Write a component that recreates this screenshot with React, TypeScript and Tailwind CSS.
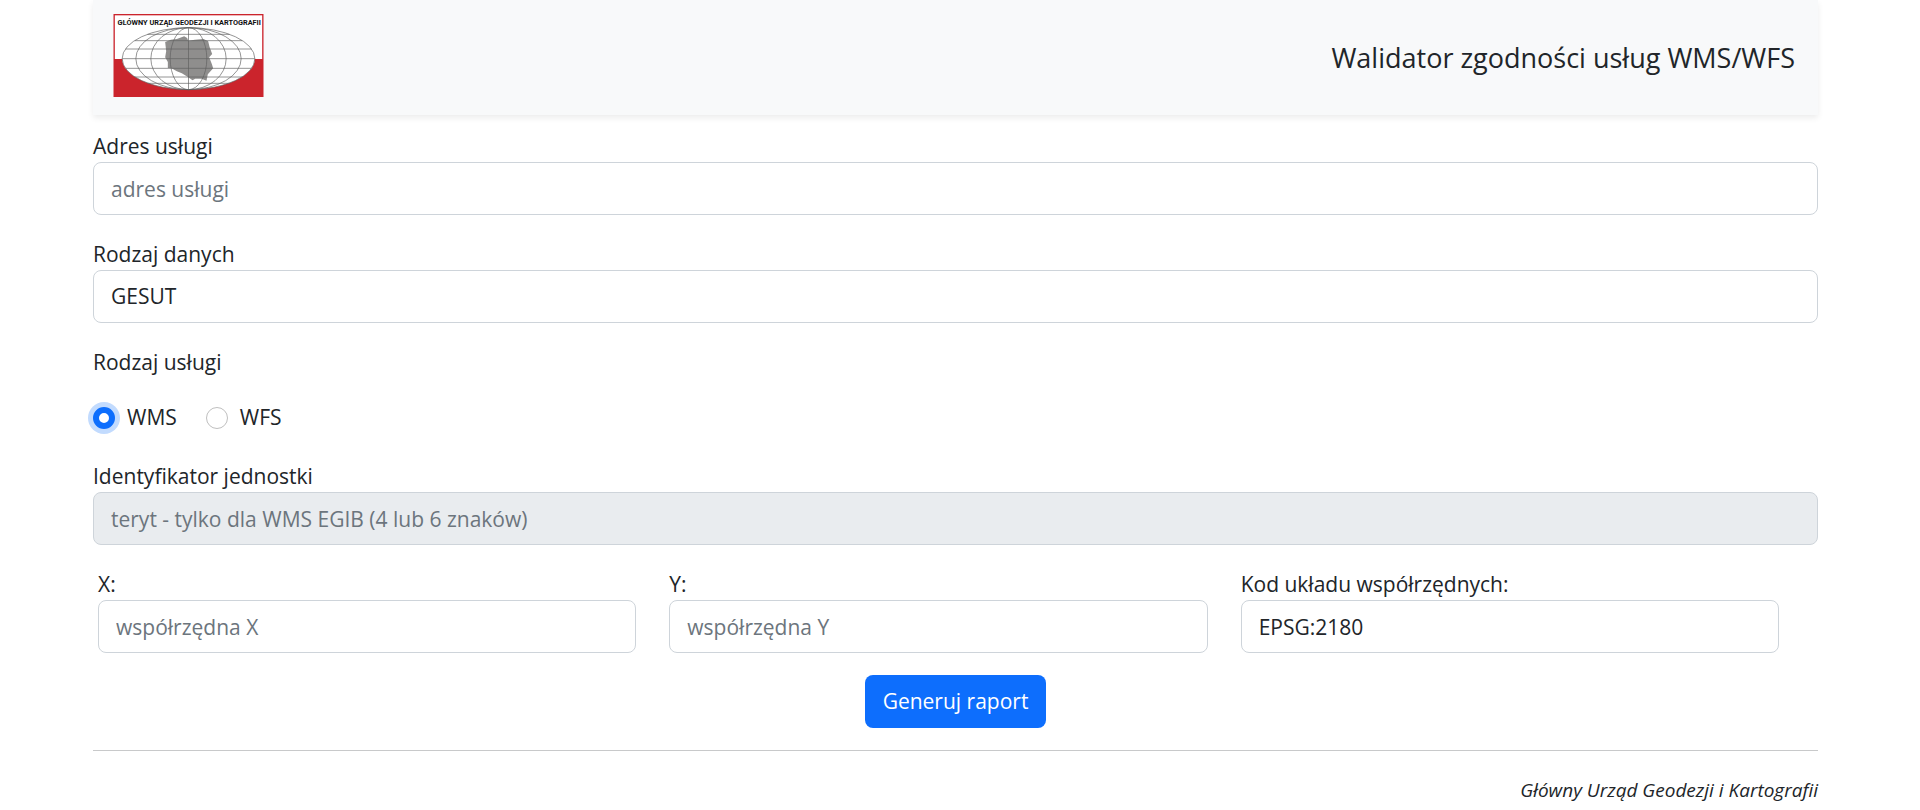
import { useState } from "react";
import type { InputHTMLAttributes, ReactNode } from "react";

const controlClass =
  "block w-full h-[53px] appearance-none rounded-lg border border-[#ced4da] bg-white px-[17px] text-[21px] text-[#212529] placeholder:text-[#6c757d] focus:border-[#86b7fe] focus:outline-none disabled:bg-[#e9ecef]";

const Logo = () => (
  <svg viewBox="0 0 450 249" className="h-[83px] w-[151px]" role="img" aria-label="GUGiK">
    <rect width="450" height="249" fill="#cb242c" />
    <rect x="4" y="4" width="442" height="131" fill="#fff" />
    <ellipse cx="225" cy="134" rx="199" ry="93" fill="#fff" />
    <path
      d="M155 84 L172 77 L190 75 L212 67 L221 72 L224 80 L244 77 L270 75 L284 82 L288 98 L296 120 L287 130 L295 150 L299 163 L283 181 L279 200 L264 194 L245 194 L237 199 L222 188 L205 178 L190 172 L174 163 L163 162 L163 144 L155 130 L158 112 Z"
      fill="#8f8e8d"
    />
    <g fill="none" stroke="#5f5f5f" strokeWidth="2">
      <ellipse cx="225" cy="134" rx="199" ry="93" />
      <ellipse cx="225" cy="134" rx="158" ry="93" />
      <ellipse cx="225" cy="134" rx="113" ry="93" />
      <ellipse cx="225" cy="134" rx="55" ry="93" />
      <path d="M225 41V227M26 134H424M36 105H414M36 163H414M64 80H386M64 189H386M102 61H348M102 208H348" />
    </g>
    <text
      x="227"
      y="33"
      textAnchor="middle"
      fontSize="22"
      fill="#111"
      className="font-[Roboto,sans-serif] font-bold"
    >
      GŁÓWNY URZĄD GEODEZJI I KARTOGRAFII
    </text>
  </svg>
);

const Field = ({ id, label, children }: { id: string; label: string; children: ReactNode }) => (
  <div>
    <label htmlFor={id} className="block">
      {label}
    </label>
    {children}
  </div>
);

const TextField = ({ id, label, ...props }: { id: string; label: string } & InputHTMLAttributes<HTMLInputElement>) => (
  <Field id={id} label={label}>
    <input id={id} type="text" className={controlClass} {...props} />
  </Field>
);

const App = () => {
  const [service, setService] = useState("WMS");

  return (
    <div className="bg-white pl-[93px] pr-[102px] font-['Open_Sans','Noto_Sans',sans-serif] text-[21px] leading-[31px] text-[#212529]">
      <header className="flex h-[115px] items-center justify-between bg-[#f8f9fa] pl-5 pr-[23px] shadow-[0_3px_6px_rgba(0,0,0,0.075)]">
        <a href="#" className="mb-1">
          <Logo />
        </a>
        <h1 className="text-[27px]">Walidator zgodności usług WMS/WFS</h1>
      </header>
      <form className="flex flex-col gap-6 pt-4" onSubmit={(e) => e.preventDefault()}>
        <TextField id="address" label="Adres usługi" placeholder="adres usługi" />
        <Field id="dataset" label="Rodzaj danych">
          <select id="dataset" className={controlClass}>
            <option>GESUT</option>
            <option>EGIB</option>
            <option>BDOT500</option>
          </select>
        </Field>
        <fieldset className="pb-1">
          <legend>Rodzaj usługi</legend>
          <div className="flex gap-[29px] pt-6">
            {["WMS", "WFS"].map((name) => (
              <label key={name} className="flex items-center gap-3">
                <input
                  type="radio"
                  name="service"
                  value={name}
                  checked={service === name}
                  onChange={() => setService(name)}
                  className="size-[22px] appearance-none rounded-full border border-[#bfbfbf] bg-white checked:border-[6px] checked:border-[#0d6efd] checked:shadow-[0_0_0_5px_rgba(13,110,253,0.25)]"
                />
                {name}
              </label>
            ))}
          </div>
        </fieldset>
        <TextField id="unit" label="Identyfikator jednostki" placeholder="teryt - tylko dla WMS EGIB (4 lub 6 znaków)" disabled />
        <div className="grid grid-cols-3 gap-[33px] pl-[5px] pr-[39px]">
          <TextField id="x" label="X:" placeholder="współrzędna X" />
          <TextField id="y" label="Y:" placeholder="współrzędna Y" />
          <TextField id="epsg" label="Kod układu współrzędnych:" defaultValue="EPSG:2180" />
        </div>
        <button type="submit" className="-mt-[2px] h-[53px] self-center rounded-lg bg-[#0d6efd] px-[18px] text-white">
          Generuj raport
        </button>
      </form>
      <footer className="mt-[22px] border-t border-[#c8c9ca] pt-6 text-right text-[19px] italic">
        Główny Urząd Geodezji i Kartografii
      </footer>
    </div>
  );
};

export default App;
